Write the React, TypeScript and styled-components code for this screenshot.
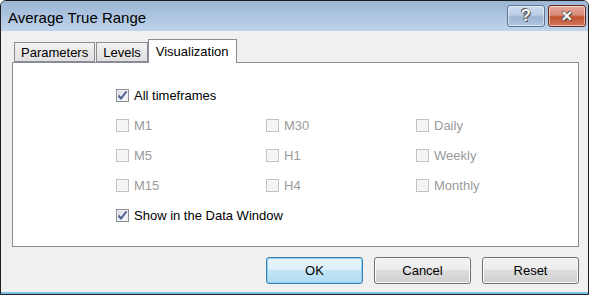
import styled, { createGlobalStyle } from "styled-components";

const GlobalStyle = createGlobalStyle`
  html, body {
    margin: 0;
    padding: 0;
    background: #ffffff;
  }
  body {
    font-family: "Liberation Sans", Arial, sans-serif;
    font-size: 13px;
  }
`;

type Item = { label: string; checked?: boolean; disabled?: boolean };

const grid: Item[][] = [
  [{ label: "M1", disabled: true }, { label: "M30", disabled: true }, { label: "Daily", disabled: true }],
  [{ label: "M5", disabled: true }, { label: "H1", disabled: true }, { label: "Weekly", disabled: true }],
  [{ label: "M15", disabled: true }, { label: "H4", disabled: true }, { label: "Monthly", disabled: true }],
];

const CheckMark = () => (
  <svg width="11" height="11" viewBox="0 0 11 11">
    <path
      d="M1.5 5.5 L4 8.5 L9.5 1.5"
      fill="none"
      stroke="#4c5f8c"
      strokeWidth="2"
      strokeLinejoin="round"
    />
  </svg>
);

const Check = ({ label, checked, disabled }: Item) => (
  <CheckRow>
    <Box $disabled={disabled}>{checked && <CheckMark />}</Box>
    <Label $disabled={disabled}>{label}</Label>
  </CheckRow>
);

const App = () => {
  return (
    <>
      <GlobalStyle />
      <Window>
        <TitleBar>
          <Title>Average True Range</Title>
          <Controls>
            <CaptionButton $kind="help">?</CaptionButton>
            <CaptionButton $kind="close">✕</CaptionButton>
          </Controls>
        </TitleBar>
        <Body>
          <Tabs>
            <Tab>Parameters</Tab>
            <Tab>Levels</Tab>
            <Tab $active>Visualization</Tab>
          </Tabs>
          <Panel>
            <Row>
              <Check label="All timeframes" checked />
            </Row>
            {grid.map((row, i) => (
              <Row key={i}>
                {row.map((it) => (
                  <Cell key={it.label}>
                    <Check {...it} />
                  </Cell>
                ))}
              </Row>
            ))}
            <Row>
              <Check label="Show in the Data Window" checked />
            </Row>
          </Panel>
          <Buttons>
            <Button $primary>OK</Button>
            <Button>Cancel</Button>
            <Button>Reset</Button>
          </Buttons>
        </Body>
      </Window>
    </>
  );
};

export default App;

const Window = styled.div`
  width: 587px;
  height: 293px;
  border: 1px solid #1e1e1e;
  border-radius: 6px 6px 0 0;
  display: flex;
  flex-direction: column;
  overflow: hidden;
  background: #f0f0f0;
  box-shadow: inset 0 -2px 0 #7cbfe6;
`;

const TitleBar = styled.div`
  height: 30px;
  flex: 0 0 30px;
  display: flex;
  align-items: center;
  justify-content: space-between;
  background: linear-gradient(#9bb6d4, #bfd4ec);
  padding: 0 2px 0 7px;
`;

const Title = styled.div`
  font-size: 15px;
  color: #000;
  margin-top: 2px;
`;

const Controls = styled.div`
  display: flex;
  gap: 3px;
  align-self: flex-start;
  margin-top: 4px;
`;

const CaptionButton = styled.div<{ $kind: "help" | "close" }>`
  width: 36px;
  height: 20px;
  border: 1px solid ${({ $kind }) => ($kind === "close" ? "#6b2a1f" : "#5f7593")};
  border-radius: 3px;
  display: flex;
  align-items: center;
  justify-content: center;
  font-weight: bold;
  font-size: ${({ $kind }) => ($kind === "close" ? "14px" : "16px")};
  color: #fff;
  text-shadow: 0 0 1px #333, 1px 1px 0 #555, -1px -1px 0 #666;
  background: ${({ $kind }) =>
    $kind === "close"
      ? "linear-gradient(#e7a99a 0%, #d68a78 45%, #c1502f 55%, #cf7a5e 100%)"
      : "linear-gradient(#cddcef 0%, #b8cde6 45%, #9db5d3 55%, #b1c7e2 100%)"};
  box-shadow: inset 0 0 0 1px rgba(255, 255, 255, 0.5);
`;

const Body = styled.div`
  flex: 1;
  display: flex;
  flex-direction: column;
  padding: 8px 9px 0 11px;
`;

const Tabs = styled.div`
  height: 23px;
  display: flex;
  align-items: flex-end;
  padding-left: 2px;
  position: relative;
  z-index: 1;
`;

const Tab = styled.div<{ $active?: boolean }>`
  box-sizing: border-box;
  height: ${({ $active }) => ($active ? "24px" : "20px")};
  margin-bottom: ${({ $active }) => ($active ? "-1px" : "0")};
  margin-left: ${({ $active }) => ($active ? "-1px" : "0")};
  margin-right: 1px;
  padding: ${({ $active }) => ($active ? "0 7px" : "1px 6px 0")};
  border: 1px solid #898c95;
  border-bottom: ${({ $active }) => ($active ? "none" : "1px solid #898c95")};
  background: ${({ $active }) =>
    $active ? "#ffffff" : "linear-gradient(#f2f2f2, #e0e0e0)"};
  display: flex;
  align-items: center;
  font-size: 13px;
  color: #000;
`;

const Panel = styled.div`
  height: 185px;
  box-sizing: border-box;
  border: 1px solid #898c95;
  background: #ffffff;
  padding: 17px 0 0 103px;
  display: flex;
  flex-direction: column;
`;

const Row = styled.div`
  height: 30px;
  display: flex;
  align-items: center;
`;

const Cell = styled.div`
  width: 150px;
`;

const CheckRow = styled.div`
  display: flex;
  align-items: center;
  gap: 5px;
`;

const Box = styled.div<{ $disabled?: boolean }>`
  width: 13px;
  height: 13px;
  box-sizing: border-box;
  border: 1px solid ${({ $disabled }) => ($disabled ? "#c2c2c2" : "#8e8f8f")};
  background: ${({ $disabled }) =>
    $disabled ? "#f4f4f4" : "linear-gradient(135deg, #d8dde4, #f6f7f9)"};
  box-shadow: inset 0 0 0 1px ${({ $disabled }) => ($disabled ? "#f8f8f8" : "#f0f1f3")};
  display: flex;
  align-items: center;
  justify-content: center;
`;

const Label = styled.span<{ $disabled?: boolean }>`
  font-size: 13px;
  color: ${({ $disabled }) => ($disabled ? "#9a9a9a" : "#000")};
`;

const Buttons = styled.div`
  display: flex;
  justify-content: flex-end;
  gap: 11px;
  margin-top: 10px;
`;

const Button = styled.div<{ $primary?: boolean }>`
  width: 97px;
  height: 27px;
  box-sizing: border-box;
  border: 1px solid ${({ $primary }) => ($primary ? "#3c7fb1" : "#707070")};
  border-radius: 3px;
  display: flex;
  align-items: center;
  justify-content: center;
  font-size: 13px;
  color: #000;
  background: ${({ $primary }) =>
    $primary
      ? "linear-gradient(#e8f5fc 0%, #dcf0fb 50%, #c4e5f6 50%, #b0dcf3 100%)"
      : "linear-gradient(#f2f2f2 0%, #ebebeb 50%, #dddddd 50%, #cfcfcf 100%)"};
  box-shadow: inset 0 0 0 1px ${({ $primary }) => ($primary ? "#8fd0f4" : "#fcfcfc")};
`;
